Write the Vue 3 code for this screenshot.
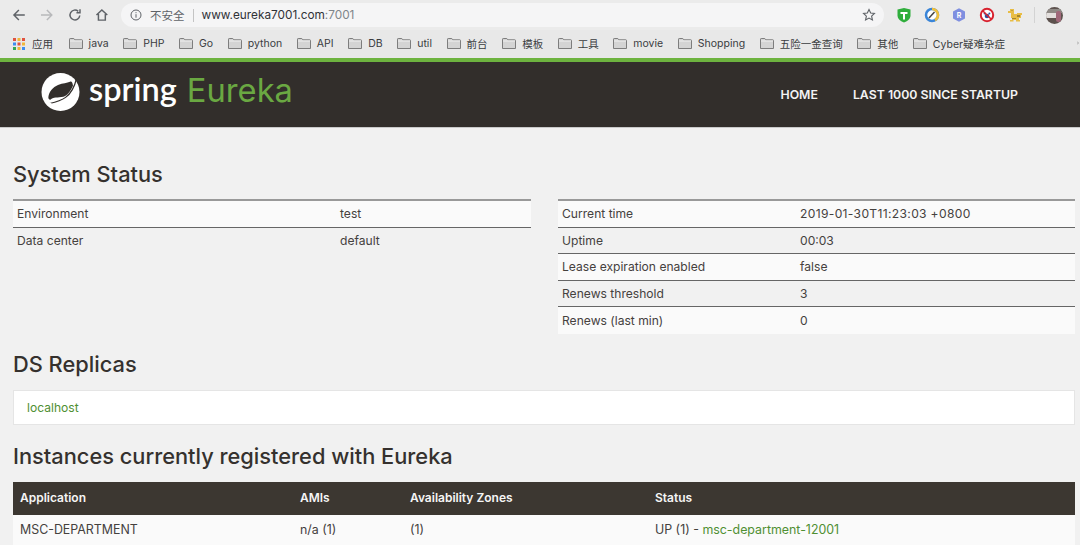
<script setup>
const bookmarks = ['java','PHP','Go','python','API','DB','util','前台','模板','工具','movie','Shopping','五险一金查询','其他','Cyber疑难杂症']
const left = [['Environment','test'],['Data center','default']]
const right = [['Current time','2019-01-30T11:23:03 +0800'],['Uptime','00:03'],['Lease expiration enabled','false'],['Renews threshold','3'],['Renews (last min)','0']]
const dots = ['#e0523f','#f0b73a','#e0523f','#3d8df0','#e0523f','#f0b73a','#35a853','#f0b73a','#3d8df0']
</script>

<template>
  <div class="page">
    <header class="chrome">
      <div class="toolbar">
        <div class="navs">
          <svg class="ico" viewBox="0 0 16 16"><path d="M14 8H3M8 3 3 8l5 5" fill="none" stroke="#5f6368" stroke-width="1.500"/></svg>
          <svg class="ico" viewBox="0 0 16 16"><path d="M2 8h11M8 3l5 5-5 5" fill="none" stroke="#b8b9bb" stroke-width="1.500"/></svg>
          <svg class="ico" viewBox="0 0 16 16"><path d="M13 8.500A5 5 0 1 1 11.400 4.300M13.200 2.200v3.600H9.600" fill="none" stroke="#5f6368" stroke-width="1.500"/></svg>
          <svg class="ico" viewBox="0 0 16 16"><path d="M2.500 8 8 3l5.500 5M4.500 7v6.200h7V7" fill="none" stroke="#5f6368" stroke-width="1.500"/></svg>
        </div>
        <div class="omni">
          <svg class="info" viewBox="0 0 12 12"><circle cx="6" cy="6" r="5" fill="none" stroke="#5f6368"/><path d="M6 5.200v3.500M6 3.200v1" stroke="#5f6368"/></svg>
          <span class="insecure">不安全</span>
          <i class="sep"></i>
          <span class="url">www.eureka7001.com<span class="port">:7001</span></span>
          <svg class="star" viewBox="0 0 16 16"><path d="m8 1.800 1.900 4 4.300.5-3.200 3 .9 4.300L8 11.500l-3.900 2.100.9-4.300-3.200-3 4.300-.5z" fill="none" stroke="#5f6368" stroke-width="1.300"/></svg>
        </div>
        <div class="exts">
          <svg class="ext" viewBox="0 0 16 16"><path d="M1.500 2.500 8 1l6.500 1.500v6C14.500 12 11 14.500 8 15.500 5 14.500 1.500 12 1.500 8.500z" fill="#2fae3c"/><path d="M4.500 5h7v2H9v5.500H7V7H4.500z" fill="#fff"/></svg>
          <svg class="ext" viewBox="0 0 16 16"><circle cx="8" cy="8" r="6" fill="#fff" stroke="#3a85d8" stroke-width="2.500"/><path d="M8 2a6 6 0 0 1 6 6 6 6 0 0 1-3 5.200" fill="none" stroke="#f0c03c" stroke-width="2.500"/><path d="m5 11 5.500-6" stroke="#444" stroke-width="1.500"/></svg>
          <svg class="ext" viewBox="0 0 16 16"><path d="m8 1.200 6 3.400v6.800l-6 3.400-6-3.400V4.600z" fill="#7f8fe0"/><text x="8" y="11" class="ext-r">R</text></svg>
          <svg class="ext" viewBox="0 0 16 16"><circle cx="8" cy="8" r="6.200" fill="#fff" stroke="#d8222f" stroke-width="2"/><circle cx="8" cy="9" r="2.300" fill="#34509c"/><circle cx="5.600" cy="6.600" r="1" fill="#34509c"/><circle cx="10.400" cy="6.600" r="1" fill="#34509c"/><path d="m3.700 3.700 8.600 8.600" stroke="#d8222f" stroke-width="1.500"/></svg>
          <svg class="ext" viewBox="0 0 16 16"><path d="M1 4h2V2h4v5h3V6h5v2h-1v3h-2v2h1v1.500H9V13H6.500v1.500H3V13H5v-2H4V6H1z" fill="#e8bd45"/><path d="M10 8h3v2h-3zM4.500 3h1v1h-1zM5 11h4v1H5z" fill="#a5852e"/></svg>
        </div>
        <i class="ext-sep"></i>
        <div class="avatar"><i class="sky"></i><i class="car"></i><i class="person"></i></div>
      </div>
      <nav class="bookmarks">
        <span class="apps">
          <svg class="grid" viewBox="0 0 12 12"><rect v-for="(c,i) in dots" :key="i" :x="(i%3)*4.500" :y="Math.floor(i/3)*4.500" width="3" height="3" :fill="c"/></svg>
          <span class="bm-text">应用</span>
        </span>
        <span v-for="b in bookmarks" :key="b" class="bm">
          <svg class="folder" viewBox="0 0 14 11"><path d="M.5 10.500V1.200q0-.7.700-.7h3.600l1 1.300h7q.7 0 .7.700v8z" fill="#d4d4d4" stroke="#7d7d7d"/><path d="M1 3h12" stroke="#f0f0f0"/></svg>
          <span class="bm-text">{{ b }}</span>
        </span>
        <svg class="more" viewBox="0 0 6 8"><path d="m0 1 3 3-3 3" fill="none" stroke="#666"/></svg>
      </nav>
    </header>

    <div class="navbar">
      <div class="brand">
        <svg class="leaf" viewBox="0 0 40 40">
          <circle cx="19.500" cy="20" r="19" fill="#fff"/>
          <path d="M27 -1h13v14L37 12C37 8 37 5 37.300 3 34 5 31 4 27 1z" fill="#322e2b"/>
          <path d="M7.300 26.300C7.500 20 12 15 17 13 22 11 26 11 29 9.700 30.500 9 31.500 10 32 13.700 29 20 26 24 22.300 24.700 17 26 12 24.500 9 28z" fill="#322e2b"/>
          <path d="M8.500 31.500C20 29 31 26 35.500 6.500" fill="none" stroke="#322e2b" stroke-width="1.200"/>
          <circle cx="8.800" cy="32.500" r="2" fill="#fff"/>
        </svg>
        <span class="spring">spring</span>
        <span class="eureka">Eureka</span>
      </div>
      <div class="links">
        <a>HOME</a>
        <a>LAST 1000 SINCE STARTUP</a>
      </div>
    </div>

    <main class="content">
      <h1 class="first">System Status</h1>
      <div class="cols">
        <div class="table t-left">
          <div v-for="r in left" :key="r[0]" class="row"><span>{{ r[0] }}</span><span>{{ r[1] }}</span></div>
        </div>
        <div class="table t-right">
          <div v-for="r in right" :key="r[0]" class="row"><span>{{ r[0] }}</span><span :class="{ stamp: r[1].length > 10 }">{{ r[1] }}</span></div>
        </div>
      </div>

      <h1 class="replicas">DS Replicas</h1>
      <div class="panel"><a>localhost</a></div>

      <h1 class="instances">Instances currently registered with Eureka</h1>
      <div class="apps-table">
        <div class="a-row head"><span>Application</span><span>AMIs</span><span>Availability Zones</span><span>Status</span></div>
        <div class="a-row body"><span>MSC-DEPARTMENT</span><span>n/a (1)</span><span>(1)</span><span>UP (1) - <a>msc-department-12001</a></span></div>
      </div>
    </main>
  </div>
</template>

<style>
html, body { margin: 0; background: #f1f1f1; overflow: hidden; }
</style>

<style scoped>
.page { width: 1080px; height: 545px; overflow: hidden; font-family: Inter, "Noto Sans CJK SC", sans-serif; color: #45413e; }
.chrome { height: 58px; background: #e9e9e9; }
.toolbar { height: 30px; display: flex; align-items: center; background: #ebebeb; }
.navs { display: flex; gap: 12px; padding-left: 11px; width: 110px; box-sizing: border-box; }
.ico { width: 16px; height: 16px; }
.omni { width: 763px; height: 24px; margin-left: 11px; border-radius: 12px; background: #f5f5f6; display: flex; align-items: center; position: relative; box-sizing: border-box; padding-left: 9px; font-size: 12px; }
.info { width: 12px; height: 12px; margin-right: 8px; }
.insecure { color: #5f6368; font-size: 11.500px; }
.sep { width: 1px; height: 13px; background: #c4c4c4; margin: 0 8px; }
.url { color: #303236; font-size: 11.800px; }
.port { color: #80858a; }
.star { width: 14px; height: 14px; position: absolute; right: 8px; top: 5px; }
.exts { display: flex; gap: 11.700px; margin-left: 12px; }
.ext { width: 16px; height: 16px; display: block; }
.ext-r { font-size: 7px; font-weight: 700; fill: #fff; text-anchor: middle; font-family: Inter, sans-serif; }
.ext-sep { width: 1px; height: 16px; background: #d3d3d3; margin-left: 11px; }
.avatar { width: 17px; height: 17px; border-radius: 50%; margin-left: 11px; background: #5d524e; overflow: hidden; position: relative; }
.sky { position: absolute; left: 0; right: 0; top: 2px; height: 4px; background: #8f8a86; }
.car { position: absolute; left: 0; width: 11px; top: 6px; height: 5px; background: #e3dfdd; }
.person { position: absolute; right: 2px; top: 4px; width: 5px; height: 11px; border-radius: 2px; background: #a0687a; }
.bookmarks { height: 28px; background: #e8e8e8; display: flex; align-items: center; font-size: 10.500px; color: #3a3c3f; padding-left: 13px; gap: 14.600px; position: relative; box-sizing: border-box; padding-bottom: 1px; }
.apps { display: flex; align-items: center; gap: 7px; width: 41px; }
.grid { width: 12px; height: 12px; }
.bm { display: flex; align-items: center; gap: 6px; }
.folder { width: 14px; height: 11px; flex: none; }
.bm-text { white-space: nowrap; }
.more { position: absolute; right: 0; top: 10px; width: 3px; height: 6px; }
.navbar { height: 65px; background: #322e2b; border-top: 4px solid #6db33f; border-bottom: 1px solid #c9c9c9; display: flex; align-items: center; justify-content: space-between; padding: 0 62px 0 41px; }
.brand { display: flex; align-items: center; height: 100%; margin-top: -5px; }
.leaf { width: 40px; height: 40px; margin-right: 8px; }
.spring { color: #fff; font: 600 32.500px/1 Lato, sans-serif; margin: -5px 10px 0 0; }
.eureka { color: #6aa842; font: 400 32.700px/1 Inter, sans-serif; margin-top: -4px; }
.links { display: flex; gap: 35px; font-size: 12.300px; font-weight: 600; color: #f3f3f3; margin-top: -1px; }
.content { padding: 0 5px 0 13px; }
h1 { margin: 0; font-size: 21.800px; font-weight: 500; line-height: 26px; color: #35312e; }
.first { padding-top: 33px; }
.cols { display: flex; gap: 27px; margin-top: 12px; align-items: flex-start; }
.table { flex: 0 0 518px; border-top: 2px solid #999; font-size: 12.100px; }
.t-right { flex-basis: 517px; }
.row { height: 26.500px; display: grid; align-items: center; padding-left: 4px; box-sizing: border-box; border-bottom: 1px solid #666; }
.row:nth-child(odd) { background: #fafafa; }
.row:last-child { border-bottom: 0; }
.t-left .row { grid-template-columns: 323px 1fr; }
.t-right .row { grid-template-columns: 238px 1fr; }
.stamp { letter-spacing: .33px; }
.replicas { margin-top: 17px; }
.panel { margin-top: 13px; height: 35px; box-sizing: border-box; background: #fff; border: 1px solid #e5e5e5; display: flex; align-items: center; padding-left: 13px; font-size: 12.100px; }
a { color: #4f8f32; }
.links a { color: #f3f3f3; }
.instances { margin-top: 18px; }
.apps-table { margin-top: 13px; font-size: 12.400px; }
.a-row { display: grid; grid-template-columns: 280px 110px 245px 1fr; padding-left: 7px; align-items: center; }
.head { height: 33px; background: #3c3731; color: #f5f5f5; font-weight: 600; font-size: 12px; padding-bottom: 2px; box-sizing: border-box; }
.body { height: 30px; background: #fafafa; }
</style>
